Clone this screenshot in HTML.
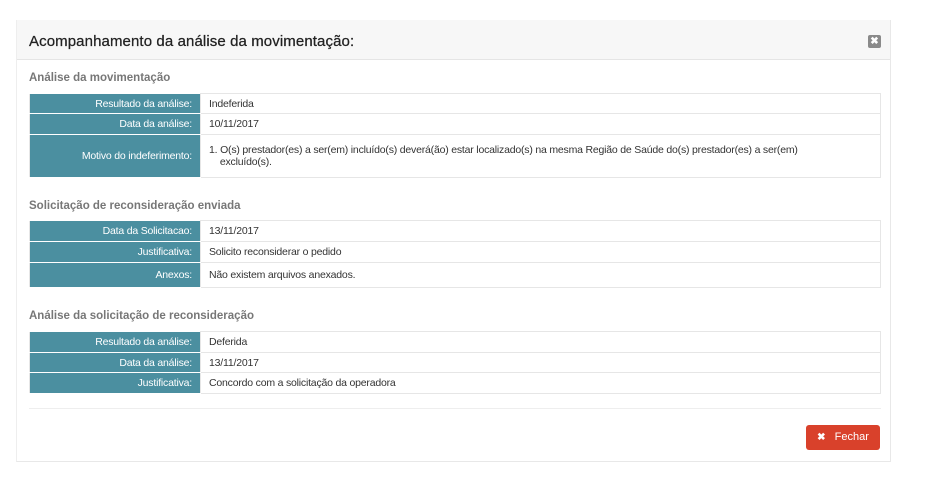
<!DOCTYPE html>
<html><head><meta charset="utf-8"><style>
body{margin:0;width:925px;height:488px;background:#fff;font-family:"Liberation Sans",sans-serif;position:relative;overflow:hidden}
.modal{position:absolute;left:16px;top:20px;width:875px;height:442px;border:1px solid #e8e8e8;border-top:none;border-left:1px solid #eee;box-sizing:border-box;background:#fff}
.hdr{position:absolute;left:0;top:0;width:100%;height:39px;background:#f7f7f7;border-bottom:1px solid #e5e5e5}
.hdr h1{position:absolute;left:12px;top:13px;margin:0;font-size:15px;font-weight:normal;color:#222;letter-spacing:0.1px;-webkit-text-stroke:0.25px #222}
.x{position:absolute;left:851px;top:15px;width:13px;height:13px;background:#8a8a8a;border-radius:2px;color:#fff;font-size:10px;line-height:13px;text-align:center;font-weight:bold}
.st{position:absolute;left:12px;font-size:11.5px;font-weight:bold;color:#777}
table{position:absolute;left:12px;width:852px;border-collapse:collapse;font-size:10.5px;letter-spacing:-0.2px}
td{border:1px solid #e6e6e6;padding:0 8px;color:#333;vertical-align:middle}
td.l{background:#4b8fa0;color:#fff;text-align:right;width:154px;border-color:#fff #e6e6e6;border-top:1px solid #fff;border-bottom:1px solid #fff}
.sep{position:absolute;left:12px;width:852px;top:388px;border-top:1px solid #eee}
.btn{position:absolute;left:789px;top:405px;width:74px;height:25px;background:#d9412b;border-radius:3px;color:#fff;font-size:11px;line-height:25px;text-align:center}
</style></head><body>
<div class="modal">
<div class="hdr"><h1>Acompanhamento da análise da movimentação:</h1><div class="x">✖</div></div>
<div class="st" style="top:52px">Análise da movimentação</div>
<table style="top:73px">
<tr style="height:20px"><td class="l">Resultado da análise:</td><td>Indeferida</td></tr>
<tr style="height:21px"><td class="l">Data da análise:</td><td>10/11/2017</td></tr>
<tr style="height:43px"><td class="l">Motivo do indeferimento:</td><td style="padding-left:8px">1. O(s) prestador(es) a ser(em) incluído(s) deverá(ão) estar localizado(s) na mesma Região de Saúde do(s) prestador(es) a ser(em)<br>&nbsp;&nbsp;&nbsp;&nbsp;excluído(s).</td></tr>
</table>
<div class="st" style="top:180px">Solicitação de reconsideração enviada</div>
<table style="top:200px">
<tr style="height:21px"><td class="l">Data da Solicitacao:</td><td>13/11/2017</td></tr>
<tr style="height:21px"><td class="l">Justificativa:</td><td>Solicito reconsiderar o pedido</td></tr>
<tr style="height:25px"><td class="l">Anexos:</td><td>Não existem arquivos anexados.</td></tr>
</table>
<div class="st" style="top:290px">Análise da solicitação de reconsideração</div>
<table style="top:311px">
<tr style="height:21px"><td class="l">Resultado da análise:</td><td>Deferida</td></tr>
<tr style="height:20px"><td class="l">Data da análise:</td><td>13/11/2017</td></tr>
<tr style="height:21px"><td class="l">Justificativa:</td><td>Concordo com a solicitação da operadora</td></tr>
</table>
<div class="sep"></div>
<div class="btn"><b style="font-size:10px">✖</b>&nbsp;&nbsp; Fechar</div>
</div>
</body></html>
